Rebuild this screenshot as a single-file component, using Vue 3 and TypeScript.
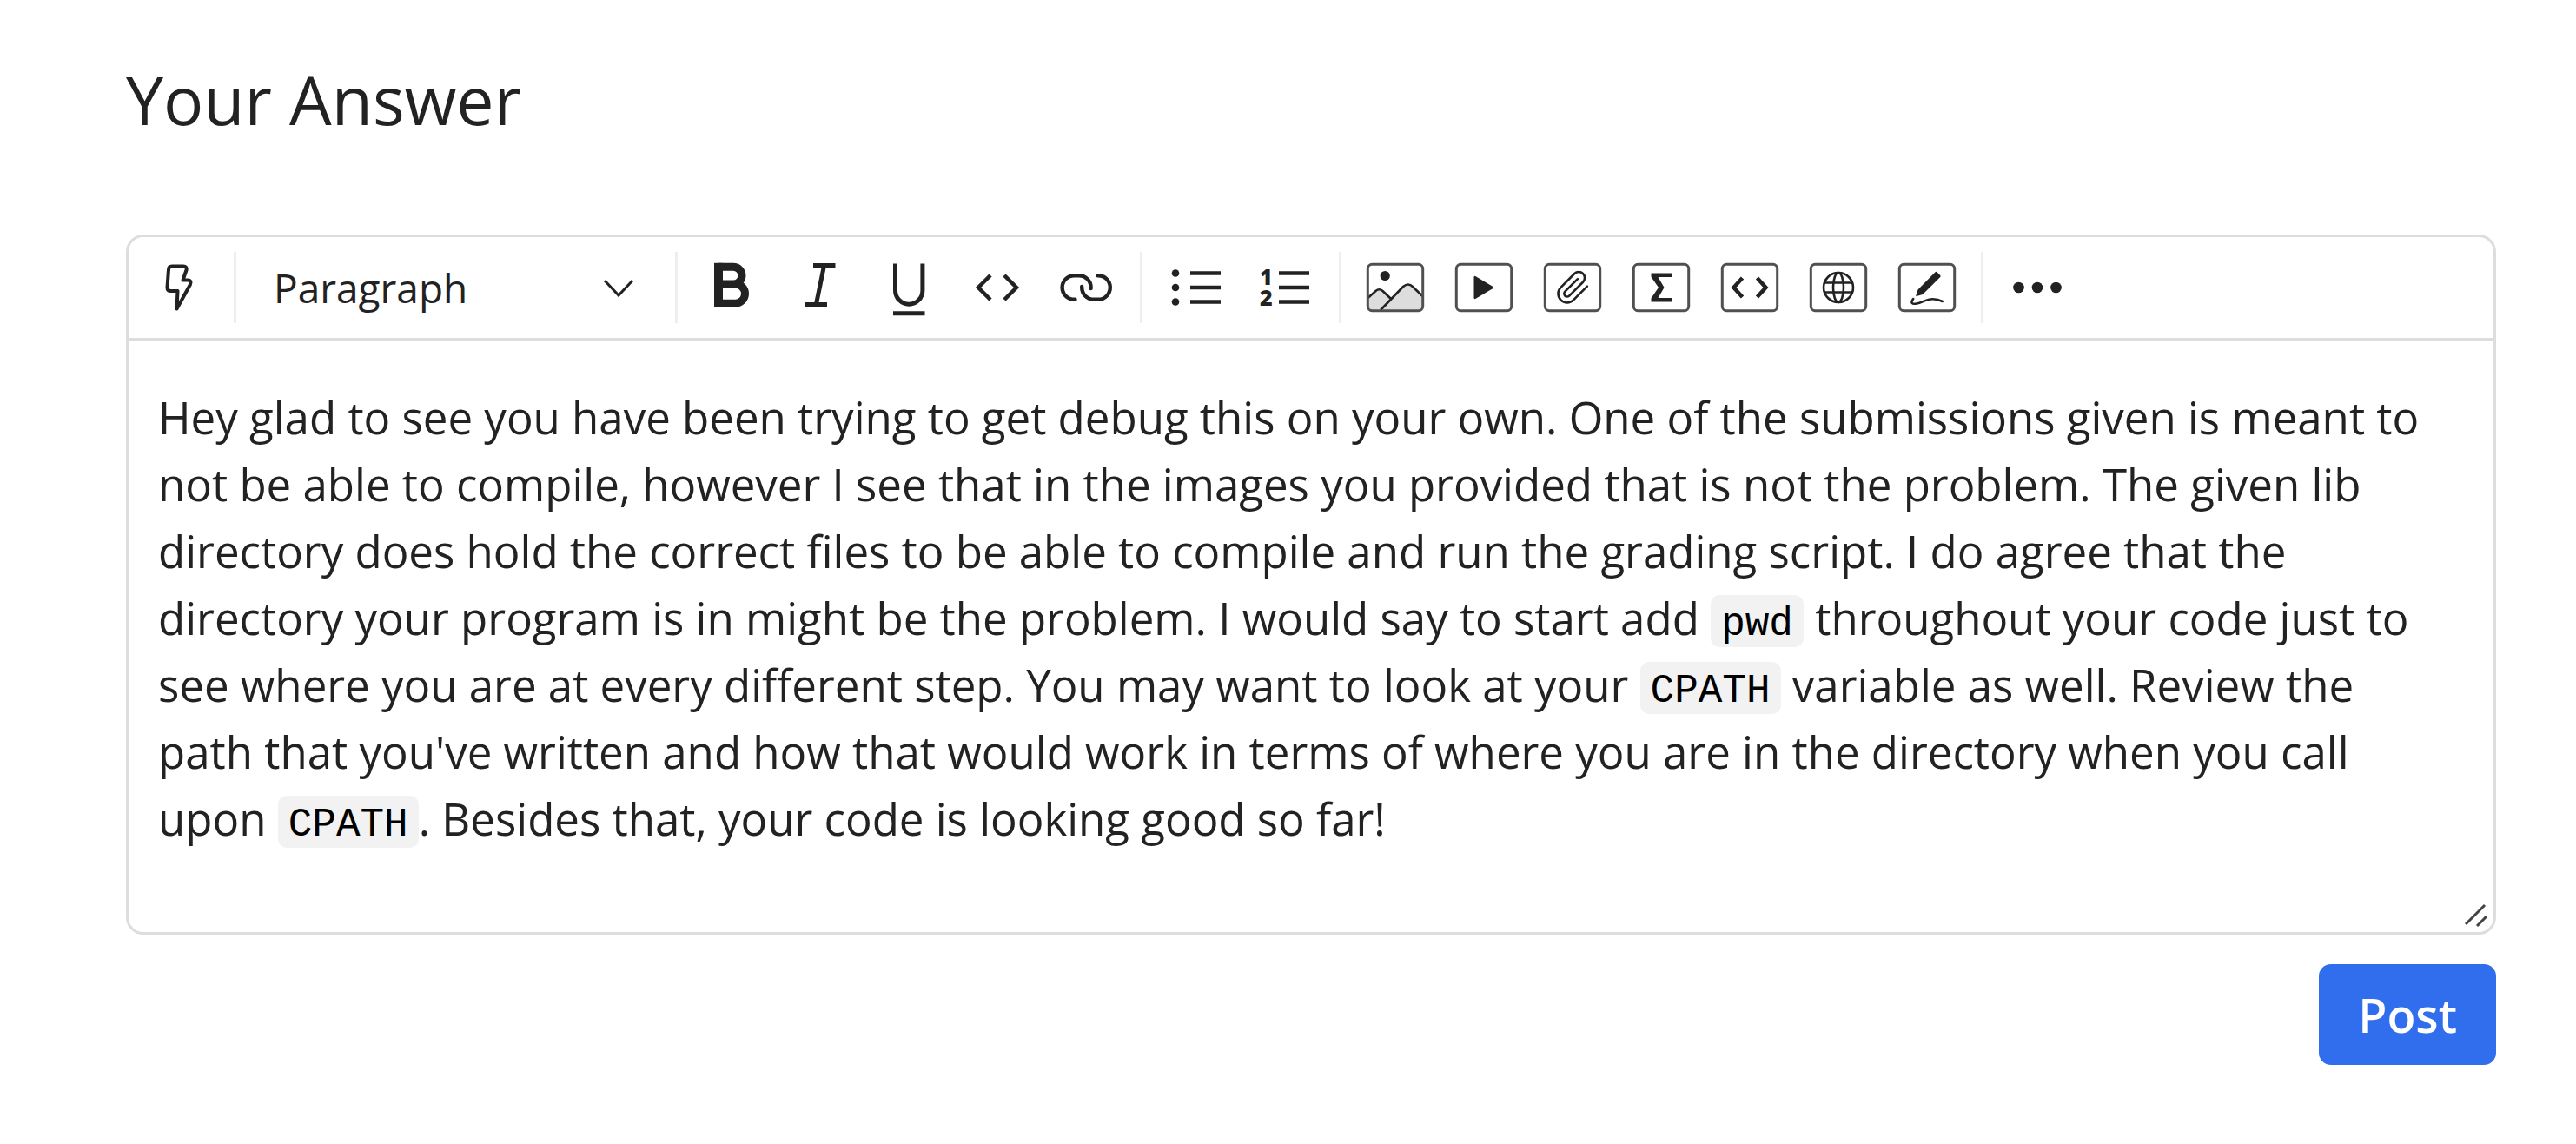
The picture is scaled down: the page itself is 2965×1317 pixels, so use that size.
<script setup lang="ts">
import { ref } from 'vue'

const style = ref('Paragraph')
const styles = ['Paragraph', 'Heading 1', 'Heading 2', 'Heading 3']
</script>

<template>
  <main class="answer">
    <h1 id="answer-title">Your Answer</h1>

    <form class="form" @submit.prevent>
      <div class="editor">
        <div class="toolbar" role="toolbar" aria-label="Formatting">
          <button type="button" class="tool" aria-label="Quick actions">
            <svg class="icon" viewBox="0 0 72 72">
              <path class="line round" stroke-width="4" d="M27 11.500h13q4.500 0 3.500 4.500l-4 11.500h5.500q5 0 3 5L32.500 60.500l1-20.500h-8q-4 0-4-4l1.500-20.500q0-4 4-4z" />
            </svg>
          </button>
          <span class="divider"></span>

          <div class="picker">
            <select v-model="style" aria-label="Text style">
              <option v-for="s in styles" :key="s" :value="s">{{ s }}</option>
            </select>
            <svg class="chevron" viewBox="0 0 36 24"><path class="line" stroke-width="3" d="M2 3l16 17L34 3" /></svg>
          </div>
          <span class="divider"></span>

          <button type="button" class="tool" aria-label="Bold">
            <svg class="icon" viewBox="0 0 72 72">
              <path class="line" stroke-width="9" d="M20.500 12.300H38a10 9.850 0 0 1 0 19.700H20.500M38 32h2.500a11 11.100 0 0 1 0 22.200H20.500" />
              <path class="line" stroke-width="10" d="M21 7.800v50.900" />
            </svg>
          </button>
          <button type="button" class="tool" aria-label="Italic">
            <svg class="icon" viewBox="0 0 72 72">
              <path class="line" stroke-width="5" d="M28 10.500h25.500M18.500 55.500H44M40.500 11L31.500 55" />
            </svg>
          </button>
          <button type="button" class="tool" aria-label="Underline">
            <svg class="icon" viewBox="0 0 72 72">
              <path class="line" stroke-width="5" d="M20.500 8.500v31a15.700 15.700 0 0 0 31.400 0v-31M18 65.700h36.500" />
            </svg>
          </button>
          <button type="button" class="tool" aria-label="Inline code">
            <svg class="icon" viewBox="0 0 72 72">
              <path class="line" stroke-width="4.500" d="M28 22L14 36l14 14M44 22l14 14-14 14" />
            </svg>
          </button>
          <button type="button" class="tool" aria-label="Link">
            <svg class="icon" viewBox="0 0 72 72">
              <path class="line round" stroke-width="4.400" d="M23.500 49.800h-1.100a13.800 13.800 0 0 1 0-27.600H28A13.600 13.600 0 0 1 41.600 36v1M49.500 22.200h.5a13.800 13.800 0 0 1 0 27.600h-5A13.800 13.800 0 0 1 31.200 36v-1" />
            </svg>
          </button>
          <span class="divider"></span>

          <button type="button" class="tool" aria-label="Bulleted list">
            <svg class="icon" viewBox="0 0 72 72">
              <circle cx="12" cy="19.500" r="4.300" /><circle cx="12" cy="36" r="4.300" /><circle cx="12" cy="52.500" r="4.300" />
              <path class="line" stroke-width="4.400" d="M29 19.500h35M29 36h35M29 52.500h35" />
            </svg>
          </button>
          <button type="button" class="tool" aria-label="Numbered list">
            <svg class="icon" viewBox="0 0 72 72">
              <text class="digit" x="7" y="33">1</text>
              <text class="digit" x="7" y="57">2</text>
              <path class="line" stroke-width="4.400" d="M29 19.500h35M29 36h35M29 52.500h35" />
            </svg>
          </button>
          <span class="divider"></span>

          <button type="button" class="tool" aria-label="Image">
            <svg class="icon" viewBox="0 0 72 72">
              <path fill="#ddd" d="M4.500 48l9-8q4-3.500 8 0l8.500 8L46 34q5-4.500 10 0l11.500 11v15q0 3-3 3h-57q-3 0-3-3z" />
              <path class="line" stroke-width="2.600" d="M4.500 48l9-8q4-3.500 8 0l9 8.500M19 62L45 35q6-5 11 0l11.500 11" />
              <circle cx="24.200" cy="22.500" r="5.600" />
              <rect class="box" x="4.300" y="9.300" width="63.400" height="53.400" rx="5" />
            </svg>
          </button>
          <button type="button" class="tool" aria-label="Video">
            <svg class="icon" viewBox="0 0 72 72">
              <rect class="box" x="4.300" y="9.300" width="63.400" height="53.400" rx="5" />
              <path d="M24.500 24.500q0-2.500 2.200-1.200l19.300 11.500q2 1.200 0 2.400L26.700 48.700q-2.200 1.300-2.200-1.200z" />
            </svg>
          </button>
          <button type="button" class="tool" aria-label="Attachment">
            <svg class="icon" viewBox="0 0 72 72">
              <rect class="box" x="4.300" y="9.300" width="63.400" height="53.400" rx="5" />
              <path class="line round" stroke-width="1.500" transform="translate(16 15.600) scale(1.720)" d="m21.440 11.050-9.190 9.190a6 6 0 0 1-8.490-8.490l9.190-9.190a4 4 0 0 1 5.660 5.660l-9.200 9.190a2 2 0 0 1-2.830-2.830l8.490-8.480" />
            </svg>
          </button>
          <button type="button" class="tool" aria-label="Formula">
            <svg class="icon" viewBox="0 0 72 72">
              <rect class="box" x="4.300" y="9.300" width="63.400" height="53.400" rx="5" />
              <path d="M24.500 19.500h23.500V24H32.500l7 12-7 12H48v4.500H24.500v-4.200L33 36l-8.500-12.300z" />
            </svg>
          </button>
          <button type="button" class="tool" aria-label="Code block">
            <svg class="icon" viewBox="0 0 72 72">
              <rect class="box" x="4.300" y="9.300" width="63.400" height="53.400" rx="5" />
              <path class="line" stroke-width="4.500" d="M27.500 25L17.500 36l10 11M44.500 25l10 11-10 11" />
            </svg>
          </button>
          <button type="button" class="tool" aria-label="Web embed">
            <svg class="icon" viewBox="0 0 72 72">
              <rect class="box" x="4.300" y="9.300" width="63.400" height="53.400" rx="5" />
              <g class="line" stroke-width="2.600">
                <circle cx="36" cy="36" r="17" />
                <ellipse cx="36" cy="36" rx="6" ry="17" />
                <path d="M20 30.500h32M20 41.500h32" />
              </g>
            </svg>
          </button>
          <button type="button" class="tool" aria-label="Drawing">
            <svg class="icon" viewBox="0 0 72 72">
              <rect class="box" x="4.300" y="9.300" width="63.400" height="53.400" rx="5" />
              <path d="M47.500 18.300l3.700 3.700q1 1 0 2L31 44l-7 2q-1 .3-.7-.7L25.500 38.500 45.500 18.300q1-1 2 0z" />
              <path class="line round" stroke-width="2.600" d="M20.200 49c-3.500 5-1.500 6.500 4 5.500 6-1 11-5.300 18.300-5.300q6 0 11.300 2.800" />
            </svg>
          </button>
          <span class="divider"></span>

          <button type="button" class="tool" aria-label="More">
            <svg class="icon" viewBox="0 0 72 72">
              <circle cx="14.500" cy="36" r="6.300" /><circle cx="36" cy="36" r="6.300" /><circle cx="57.500" cy="36" r="6.300" />
            </svg>
          </button>
        </div>

        <div class="content" contenteditable="true" role="textbox" aria-multiline="true" aria-labelledby="answer-title" spellcheck="false">
          <p>Hey glad to see you have been trying to get debug this on your own. One of the submissions given is meant to not be able to compile, however I see that in the images you provided that is not the problem. The given lib directory does hold the correct files to be able to compile and run the grading script. I do agree that the directory your program is in might be the problem. I would say to start add <code>pwd</code> throughout your code just to see where you are at every different step. You may want to look at your <code>CPATH</code> variable as well. Review the path that you've written and how that would work in terms of where you are in the directory when you call upon <code>CPATH</code>. Besides that, your code is looking good so far!</p>
        </div>

        <svg class="grip" viewBox="0 0 28 28" aria-hidden="true">
          <path d="M2 25L24 3M15 27L26 16" fill="none" stroke="#444" stroke-width="3" />
        </svg>
      </div>

      <button type="submit" class="post">Post</button>
    </form>
  </main>
</template>

<style>
body {
  margin: 0;
  background: #fff;
}
</style>

<style scoped>
.answer {
  padding: 63px 92px 80px 145px;
  font-family: "Open Sans", "Noto Sans", sans-serif;
  color: #222;
}

h1 {
  margin: 0 0 103px;
  font-size: 77px;
  font-weight: 400;
  line-height: 104px;
}

.form {
  display: flex;
  flex-direction: column;
  gap: 34px;
}

.editor {
  position: relative;
  border: 3px solid #ddd;
  border-radius: 20px;
}

.toolbar {
  display: flex;
  align-items: center;
  height: 116px;
  padding: 0 8px;
  border-bottom: 3px solid #ddd;
}

.tool {
  display: flex;
  flex: none;
  align-items: center;
  justify-content: center;
  width: 102px;
  height: 82px;
  padding: 0;
  border: 0;
  background: none;
  color: inherit;
}

.icon {
  width: 72px;
  height: 72px;
  fill: #222;
}

.line {
  fill: none;
  stroke: #222;
}

.round {
  stroke-linecap: round;
  stroke-linejoin: round;
}

.box {
  fill: none;
  stroke: #505050;
  stroke-width: 3px;
}

.digit {
  font-family: "Open Sans", "Noto Sans", sans-serif;
  font-size: 25px;
  font-weight: 800;
}

.divider {
  flex: none;
  width: 3px;
  height: 82px;
  margin: 0 11px;
  background: #eee;
}

.picker {
  position: relative;
  flex: none;
  width: 483px;
}

.picker select {
  appearance: none;
  width: 100%;
  height: 82px;
  padding: 0 80px 0 32px;
  border: 0;
  background: none;
  color: inherit;
  font-family: inherit;
  font-size: 46px;
}

.chevron {
  position: absolute;
  top: 30px;
  right: 36px;
  width: 36px;
  height: 24px;
  pointer-events: none;
}

.content {
  padding: 50px 48px 92px 34px;
  outline: none;
  font-size: 51px;
  line-height: 77px;
}

.content p {
  margin: 0;
}

code {
  padding: 8px 12px 0;
  border-radius: 10px;
  background: #f2f2f2;
  color: #000;
  font-family: "Liberation Mono", monospace;
  font-size: 46px;
  line-height: 1;
}

.grip {
  position: absolute;
  right: 6px;
  bottom: 6px;
  width: 28px;
  height: 28px;
}

.post {
  align-self: flex-end;
  height: 116px;
  padding: 0 45px;
  border: 0;
  border-radius: 14px;
  background: #316eee;
  color: #fff;
  font-family: inherit;
  font-size: 54px;
  font-weight: 600;
}
</style>
